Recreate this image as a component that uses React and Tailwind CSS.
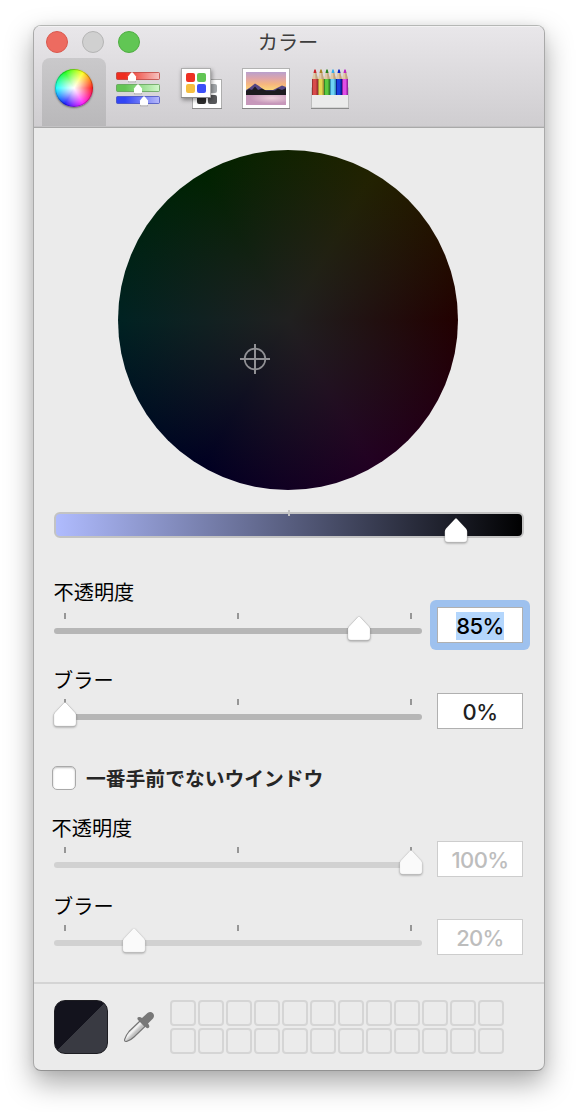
import React from "react";

const HUES = "bg-[conic-gradient(from_90deg,#f00,#f0f,#00f,#0ff,#0f0,#ff0,#f00)]";

function Thumb({ className = "", dim, style }) {
  return (
    <svg
      className={"absolute overflow-visible drop-shadow-[0_1px_1px_rgba(0,0,0,0.35)] " + className}
      style={style}
      width="24"
      height="25"
      viewBox="0 0 24 25"
    >
      <path
        d="M12 0.3 Q12.6 0.3 13.1 0.9 L22 10.6 Q23.2 12 23.2 13.6 V21 Q23.2 24.2 20 24.2 H4 Q0.8 24.2 0.8 21 V13.6 Q0.8 12 2 10.6 L10.9 0.9 Q11.4 0.3 12 0.3Z"
        fill={dim ? "#fafafa" : "#fff"}
        stroke="#000"
        strokeOpacity={dim ? 0.08 : 0.16}
        strokeWidth="0.7"
      />
    </svg>
  );
}

function Slider({ pos, dim }) {
  return (
    <div className="relative h-[34px] w-[368px] pt-[3px]">
      <div className="flex justify-between px-[10px]">
        <i className="h-[6px] w-[2px] bg-[#969696]" />
        <i className="h-[6px] w-[2px] bg-[#969696]" />
        <i className="h-[6px] w-[2px] bg-[#969696]" />
      </div>
      <div className={"mt-[9px] h-[6px] rounded-full " + (dim ? "bg-[#d1d1d1]" : "bg-[#b6b6b6]")} />
      <Thumb dim={dim} className="top-[6px]" style={{ left: pos - 12 }} />
    </div>
  );
}

function Row({ label, labelClass = "", pos, value, dim, focused, className }) {
  return (
    <div className={"flex h-[66px] justify-between " + className}>
      <div>
        <div className={"relative h-[30px] text-[20.2px] leading-[30px] text-black " + labelClass}>{label}</div>
        <div className="mt-[3px]">
          <Slider pos={pos} dim={dim} />
        </div>
      </div>
      <div className={"-mr-[7px] mt-[23px] h-[50px] rounded-[6px] p-[7px] " + (focused ? "bg-[#9ec1ee]" : "")}>
        <div
          className={
            "flex h-[36px] w-[86px] items-center justify-center border bg-white font-[Inter,sans-serif] text-[22px] font-medium leading-[28px] " +
            (dim ? "border-[#cdcdcd] text-[#bdbdbd]" : "border-[#b0b0b0] text-[#1f1f1f]")
          }
        >
          <span
            className={
              "mt-[2px] h-[28px] pt-px leading-[27px] tracking-[-0.65px] " +
              (focused ? "bg-[#b4d6fc] text-black" : "")
            }
          >
            {value}
          </span>
        </div>
      </div>
    </div>
  );
}

function SlidersIcon() {
  const rows = [
    [0, "r", "#ee2d1f", "#f6c4c2", "#b9322b", 16],
    [12, "g", "#63c554", "#d3f8cd", "#559a4c", 22],
    [24, "b", "#3246f5", "#b7b9fa", "#3743bd", 28],
  ];
  return (
    <svg className="overflow-visible" width="44" height="34" viewBox="0 0 44 34">
      <defs>
        {rows.map(([, id, a, b]) => (
          <linearGradient key={id} id={"bar-" + id}>
            <stop offset="0.2" stopColor={a} />
            <stop offset="1" stopColor={b} />
          </linearGradient>
        ))}
      </defs>
      {rows.map(([y, id, , , line, x]) => (
        <g key={id}>
          <rect x="0.5" y={y + 0.5} width="43" height="7" rx="1" fill={`url(#bar-${id})`} stroke={line} strokeOpacity="0.7" />
          <path d={`M${x - 4} ${y + 5}L${x - 1} ${y + 1}Q${x} ${y - 0.5} ${x + 1} ${y + 1}L${x + 4} ${y + 5}V${y + 9.2}H${x - 4}Z`} fill="#000" opacity="0.3" transform="translate(0 1)" />
          <path d={`M${x - 4} ${y + 4.6}L${x - 1} ${y + 0.8}Q${x} ${y - 0.4} ${x + 1} ${y + 0.8}L${x + 4} ${y + 4.6}V${y + 8.4}Q${x + 4} ${y + 9.4} ${x + 3} ${y + 9.4}H${x - 3}Q${x - 4} ${y + 9.4} ${x - 4} ${y + 8.4}Z`} fill="#fff" />
        </g>
      ))}
    </svg>
  );
}

function PalettesIcon() {
  return (
    <svg className="overflow-visible" width="42" height="42" viewBox="0 0 42 42">
      <rect x="11.5" y="11.5" width="29" height="29" fill="#fff" stroke="#adadad" />
      <path d="M11 40.5H41" stroke="#8b8b8b" />
      <rect x="27" y="16" width="9" height="9" rx="2" fill="#a4a8ab" />
      <rect x="16" y="27" width="9" height="9" rx="2" fill="#2e2e2e" />
      <rect x="27" y="27" width="9" height="9" rx="2" fill="#58595b" />
      <g className="drop-shadow-[1px_2px_2px_rgba(0,0,0,0.4)]">
        <rect x="0.5" y="0.5" width="29" height="29" fill="#fff" stroke="#adadad" />
      </g>
      <path d="M0 29.5H30" stroke="#8b8b8b" />
      <rect x="5" y="5" width="9" height="9" rx="2" fill="#ee3124" />
      <rect x="16" y="5" width="9" height="9" rx="2" fill="#62c554" />
      <rect x="5" y="16" width="9" height="9" rx="2" fill="#f5bf41" />
      <rect x="16" y="16" width="9" height="9" rx="2" fill="#3b4ff7" />
    </svg>
  );
}

function PictureIcon() {
  return (
    <svg width="48" height="41" viewBox="0 0 48 41">
      <defs>
        <linearGradient id="sky" x2="0" y2="1">
          <stop offset="0" stopColor="#b9a0cd" />
          <stop offset="0.35" stopColor="#dfa5a8" />
          <stop offset="0.65" stopColor="#f6b67e" />
          <stop offset="1" stopColor="#fbdc7a" />
        </linearGradient>
        <radialGradient id="lake" cx="0.65" cy="0.3" r="0.55">
          <stop offset="0" stopColor="#eed3dc" />
          <stop offset="1" stopColor="#c798bb" />
        </radialGradient>
      </defs>
      <rect x="0.5" y="0.5" width="47" height="40" fill="#fff" stroke="#b2b2b2" />
      <path d="M0 40.5H48" stroke="#848484" />
      <rect x="4" y="4" width="40" height="19" fill="url(#sky)" />
      <path d="M4 22L8 19.5L13 15.5L17 18L22 22H31L36 19.5L40 17.5L44 19V24H4Z" fill="#554785" />
      <path d="M4 23L7 21L10 22L13 18.5L16 22L20 20.5L24 22.5L28 22.5L33 22.5L36 20.5L40 22L44 20V27H4Z" fill="#1d1b20" />
      <rect x="4" y="27" width="40" height="10" fill="url(#lake)" />
    </svg>
  );
}

function PencilsIcon() {
  const pencils = [
    ["#d84a4a", "#a03232", "#c9252d"],
    ["#e6d552", "#a8913a", "#a98324"],
    ["#5cc93f", "#33862a", "#25821f"],
    ["#6fd3f5", "#3a94bd", "#36aeea"],
    ["#1a3fe0", "#0b1c98", "#0a22c8"],
    ["#e04ee6", "#9425a3", "#bd27c4"],
  ];
  return (
    <svg width="38" height="41" viewBox="0 0 38 41">
      <rect x="0.5" y="20" width="37" height="20" fill="#ebebeb" stroke="#bdbdbd" />
      {pencils.map(([light, dark, tip], i) => {
        const x = 1 + i * 6;
        return (
          <g key={i}>
            <path d={`M${x} 11L${x + 2} 3.5H${x + 4}L${x + 6} 11Z`} fill="#e0c9a6" />
            <path d={`M${x + 3} 3.5H${x + 4}L${x + 6} 11H${x + 3.5}Z`} fill="#c2a581" />
            <path d={`M${x + 1.5} 5L${x + 2.3} 1.5H${x + 3.7}L${x + 4.5} 5Z`} fill={tip} />
            <rect x={x} y="11" width="6" height="16" fill={dark} />
            <rect x={x + 1} y="11" width="3" height="16" fill={light} />
            <rect x={x + 4} y="11" width="1" height="16" fill={light} opacity="0.5" />
          </g>
        );
      })}
      <path d="M0 40.5H38" stroke="#8b8b8b" />
    </svg>
  );
}

function Eyedropper() {
  return (
    <svg width="32" height="32" viewBox="0 0 32 32">
      <defs>
        <linearGradient id="glass" x1="0.3" y1="0.3" x2="0.7" y2="0.7">
          <stop offset="0" stopColor="#c8c8c8" />
          <stop offset="0.35" stopColor="#f6f6f6" />
          <stop offset="0.6" stopColor="#c4c4c4" />
          <stop offset="1" stopColor="#adadad" />
        </linearGradient>
      </defs>
      <path d="M17 10L6 20.5Q3 24 1.6 28.5Q1.2 31 3.6 30.4Q8 29 11 26L22 15.5Z" fill="url(#glass)" stroke="#747474" strokeWidth="1.1" />
      <path d="M15 6.2Q17 5.4 19 7L24.5 2Q27.5 0 30 2.2Q32 4.8 30 7.6L25 12.6Q27 14.8 26 16.6Q24.6 18 23 16.6L15 9Q13.8 7.4 15 6.2Z" fill="#777" />
    </svg>
  );
}

export default function App() {
  return (
    <div className="h-[1112px] w-[578px] overflow-hidden bg-white pl-[33px] pt-[25px] font-['Noto_Sans_CJK_JP',sans-serif]">
      <div className="flex h-[1046px] w-[512px] flex-col overflow-hidden rounded-[8px] border border-x-[#a9a9a9] border-b-[#929292] border-t-[#b5b7b5] bg-[#ebebeb] shadow-[0_12px_28px_rgba(0,0,0,0.34),0_0_8px_rgba(0,0,0,0.06)]">
        <header className="flex h-[102px] flex-col border-b border-[#a9a9a9] bg-linear-to-b from-[#e9e7ea] to-[#cfcdd0] shadow-[inset_0_1px_0_#f3f2f3,inset_0_-1px_0_#c3c2c4]">
          <div className="grid h-[32px] grid-cols-[1fr_auto_1fr] items-center">
            <div className="flex gap-[14px] pl-[12px]">
              <i className="size-[22px] rounded-full border border-[#d9594e] bg-[#ed6b60]" />
              <i className="size-[22px] rounded-full border border-[#b4b4b4] bg-[#d0d0d0]" />
              <i className="size-[22px] rounded-full border border-[#4fae42] bg-[#61c654]" />
            </div>
            <h1 className="-ml-[2px] text-[20.2px] leading-[30px] text-[#3d3d3d]">カラー</h1>
          </div>
          <div className="flex flex-1 items-start pl-[8px]">
            <div className="flex h-[68px] w-[64px] justify-center rounded-t-[8px] bg-linear-to-b from-[#cac9cb] to-[#b9b8ba] pt-[11px]">
              <div className={"size-[38px] overflow-hidden rounded-full shadow-[0_1px_2px_rgba(0,0,0,0.45)] " + HUES}>
                <div className="size-full rounded-full border border-black/25 bg-[radial-gradient(circle_closest-side,#fff_0%,rgba(255,255,255,0.72)_35%,rgba(255,255,255,0.4)_70%,rgba(255,255,255,0.12)_100%)]" />
              </div>
            </div>
            <div className="ml-[10px] mt-[14px]"><SlidersIcon /></div>
            <div className="ml-[21px] mt-[10px]"><PalettesIcon /></div>
            <div className="ml-[19px] mt-[10px]"><PictureIcon /></div>
            <div className="ml-[21px] mt-[10px]"><PencilsIcon /></div>
          </div>
        </header>

        <main className="flex flex-col pl-[20px] pr-[21px] pt-[22px]">
          <div className="relative ml-[64px] size-[340px] p-[0.4px]">
            <div className="size-full rounded-full bg-[radial-gradient(closest-side,#202020,rgba(32,32,32,0)),conic-gradient(from_90deg,#220000,#220022,#000022,#002222,#002200,#222200,#220000)]" />
            <svg className="absolute left-[122px] top-[194px]" width="30" height="30" viewBox="0 0 30 30" fill="none" stroke="#909094" strokeWidth="2">
              <circle cx="15" cy="15" r="10.3" strokeWidth="1.7" />
              <path d="M15 0V30M0 15H30" />
            </svg>
          </div>

          <div className="relative mt-[22px] h-[26px] w-[470px] rounded-[6px] border-2 border-[#c3c3c3] bg-[linear-gradient(90deg,#b0bcff,#000)] bg-origin-border">
            <i className="absolute left-[232px] top-[-4px] h-[6px] w-[2px] bg-[#c3c3c3]" />
            <Thumb className="left-[388px] top-[4px]" />
          </div>

          <Row className="mt-[39px]" label="不透明度" labelClass="-left-[0.5px]" pos={305} value="85%" focused />
          <Row className="mt-[20px]" label="ブラー" labelClass="-left-[1px] top-[2px]" pos={11} value="0%" />
          <label className="-ml-[2px] mt-[37px] flex h-[24px] items-center gap-[10px]">
            <span className="size-[24px] rounded-[5px] border border-[#a9a9a9] bg-white shadow-[inset_0_1px_2px_rgba(0,0,0,0.25)]" />
            <span className="text-[19.8px] font-bold leading-[24px] text-[#262626]">一番手前でないウインドウ</span>
          </label>
          <Row className="mt-[21px]" label="不透明度" labelClass="-left-[2.5px] top-[2px]" pos={357} value="100%" dim />
          <Row className="mt-[12px]" label="ブラー" labelClass="-left-[1px] top-[2px]" pos={80} value="20%" dim />
        </main>

        <footer className="mt-[27px] flex items-start border-t-2 border-[#d4d4d4] pl-[20px] pt-[16px]">
          <div className="size-[54px] rounded-[11px] border border-[#1d1d22] bg-[linear-gradient(135deg,#13131d_50%,#393a42_50%)] bg-origin-border" />
          <div className="ml-[15px] mt-[11px]"><Eyedropper /></div>
          <div className="ml-[15px] grid grid-cols-12 gap-[2px]">
            {Array.from({ length: 24 }, (_, i) => (
              <i key={i} className="size-[26px] rounded-[4px] border-2 border-[#d5d5d5]" />
            ))}
          </div>
        </footer>
      </div>
    </div>
  );
}
